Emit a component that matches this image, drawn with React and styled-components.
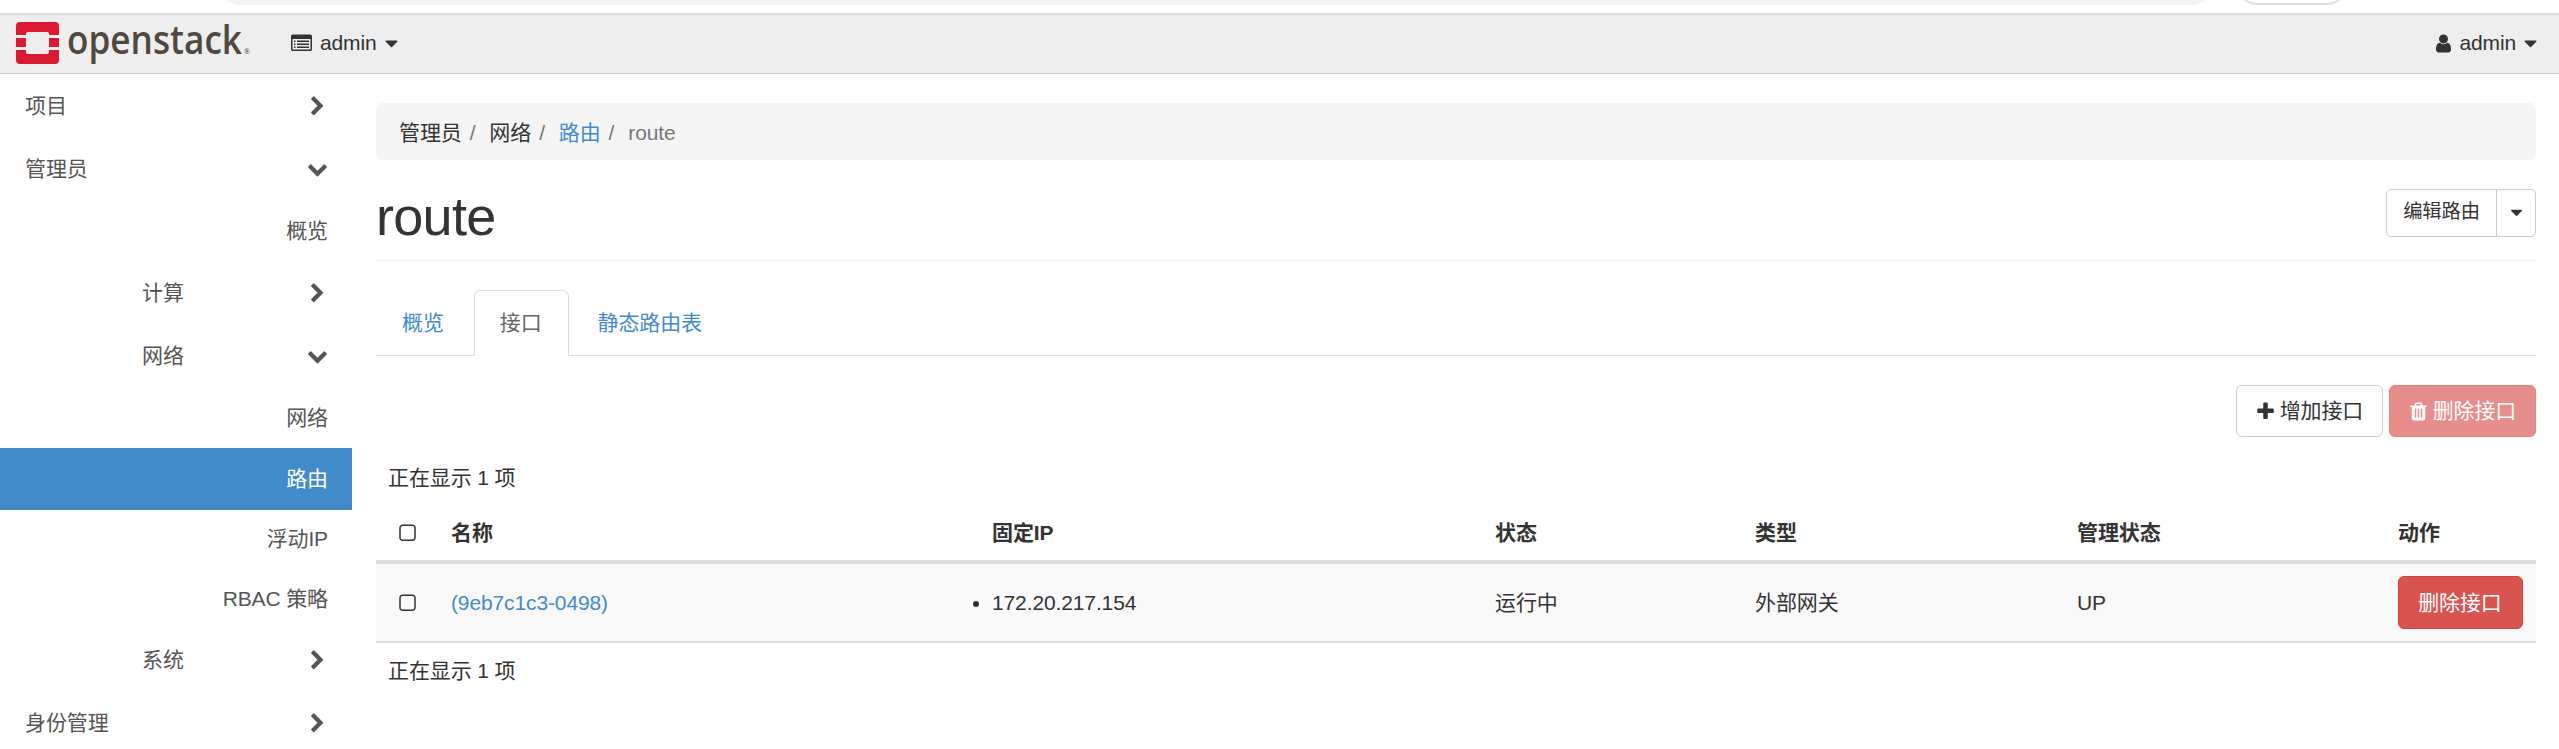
import React from "react";
import styled, { createGlobalStyle } from "styled-components";

const Global = createGlobalStyle`
  *, *::before, *::after { box-sizing: border-box; }
  html, body { margin: 0; height: 749px; overflow: hidden; background: #fff; }
  body {
    font: 21px/30px "Liberation Sans", "Noto Sans CJK SC", sans-serif;
    letter-spacing: -0.12px;
    color: #333;
  }
`;

const link = "#428bca";

const PATHS = {
  square:
    "M1312 256h-832q-66 0-113 47t-47 113v832q0 66 47 113t113 47h832q66 0 113-47t47-113v-832q0-66-47-113t-113-47zm288 160v832q0 119-84.5 203.5t-203.5 84.5h-832q-119 0-203.5-84.5t-84.5-203.5v-832q0-119 84.5-203.5t203.5-84.5h832q119 0 203.5 84.5t84.5 203.5z",
  plus:
    "M1600 736v192q0 40-28 68t-68 28h-416v416q0 40-28 68t-68 28h-192q-40 0-68-28t-28-68v-416h-416q-40 0-68-28t-28-68v-192q0-40 28-68t68-28h416v-416q0-40 28-68t68-28h192q40 0 68 28t28 68v416h416q40 0 68 28t28 68z",
  user:
    "M1536 1399q0 109-62.5 187t-150.5 78h-854q-88 0-150.5-78t-62.5-187q0-85 8.5-160.5t31.5-152 58.5-131 94-89 134.5-34.5q131 128 313 128t313-128q76 0 134.5 34.5t94 89 58.5 131 31.5 152 8.5 160.5zm-256-887q0 159-112.5 271.5t-271.5 112.5-271.5-112.5-112.5-271.5 112.5-271.5 271.5-112.5 271.5 112.5 112.5 271.5z",
  trash:
    "M704 1376v-704q0-14-9-23t-23-9h-64q-14 0-23 9t-9 23v704q0 14 9 23t23 9h64q14 0 23-9t9-23zm256 0v-704q0-14-9-23t-23-9h-64q-14 0-23 9t-9 23v704q0 14 9 23t23 9h64q14 0 23-9t9-23zm256 0v-704q0-14-9-23t-23-9h-64q-14 0-23 9t-9 23v704q0 14 9 23t23 9h64q14 0 23-9t9-23zm-544-992h448l-48-117q-7-9-17-11h-317q-10 2-17 11zm928 32v64q0 14-9 23t-23 9h-96v948q0 83-47 143.5t-113 60.5h-832q-66 0-113-58.5t-47-141.5v-952h-96q-14 0-23-9t-9-23v-64q0-14 9-23t23-9h309l70-167q15-37 54-63t79-26h320q40 0 79 26t54 63l70 167h309q14 0 23 9t9 23z",
  caret:
    "M1408 704q0 26-19 45l-448 448q-19 19-45 19t-45-19l-448-448q-19-19-19-45t19-45 45-19h896q26 0 45 19t19 45z",
  right:
    "M1363 877l-742 742q-19 19-45 19t-45-19l-166-166q-19-19-19-45t19-45l531-531-531-531q-19-19-19-45t19-45l166-166q19-19 45-19t45 19l742 742q19 19 19 45t-19 45z",
  down:
    "M1683 808l-742 741q-19 19-45 19t-45-19l-742-741q-19-19-19-45.5t19-45.5l166-165q19-19 45-19t45 19l531 531 531-531q19-19 45-19t45 19l166 165q19 19 19 45.5t-19 45.5z",
  list:
    "M256 1152h128v128h-128zM256 896h128v128h-128zM256 640h128v128h-128zM512 1152h1024v128h-1024zM512 896h1024v128h-1024zM512 640h1024v128h-1024zM1664 1376v-832q0-13-9.5-22.5t-22.5-9.5h-1472q-13 0-22.5 9.5t-9.5 22.5v832q0 13 9.5 22.5t22.5 9.5h1472q13 0 22.5-9.5t9.5-22.5zm128-1088v1088q0 66-47 113t-113 47h-1472q-66 0-113-47t-47-113v-1088q0-66 47-113t113-47h1472q66 0 113 47t47 113z",
};

const Svg = styled.svg`
  display: block;
  flex: none;
  width: ${(p) => p.$size}px;
  height: ${(p) => p.$size}px;
  fill: currentColor;
`;

const Icon = ({ name, size = 21, className }) => (
  <Svg $size={size} className={className} viewBox="0 0 1792 1792" aria-hidden="true">
    <path fillRule="evenodd" d={PATHS[name]} />
  </Svg>
);

const Page = styled.div`
  width: 2559px;
  height: 749px;
  overflow: hidden;
`;

const BrowserEdge = styled.div`
  display: flex;
  align-items: flex-end;
  height: 13px;
  padding-left: 220px;
  gap: 25px;
`;

const AddressPill = styled.div`
  width: 1992px;
  height: 40px;
  margin-bottom: 8px;
  border-radius: 20px;
  background: #f1f3f4;
`;

const ChipPill = styled.div`
  width: 110px;
  height: 40px;
  margin-bottom: 8px;
  border: 2px solid #dfe1e3;
  border-radius: 20px;
`;

const TopBar = styled.header`
  display: flex;
  align-items: center;
  height: 61px;
  padding: 0 22px 0 16px;
  background: #eee;
  border-top: 2px solid #d9d9d9;
  border-bottom: 1px solid #ccc;
`;

const Brand = styled.div`
  display: flex;
  align-items: center;
  width: 236px;
  height: 58px;
  flex: none;
`;

const LogoMark = styled.svg`
  display: block;
  flex: none;
  width: 43px;
  height: 42px;
  margin-bottom: 3px;
`;

const Wordmark = styled.svg`
  display: block;
  flex: none;
  width: 185px;
  height: 58px;
  margin-left: 8px;
  overflow: visible;
  font-family: "Open Sans", sans-serif;
  letter-spacing: 0;
  fill: #51483f;
`;

const Menu = styled.div`
  display: flex;
  align-items: center;
  gap: 8px;
  margin-left: ${(p) => (p.$end ? "auto" : "39px")};
  margin-bottom: 2px;
  line-height: 30px;
`;

const UserIcon = styled(Icon)`
  margin-right: -3px;
`;

const MenuCaret = styled(Icon)`
  margin: 0 -4px 0 ${(p) => (p.$tight ? -5 : -4)}px;
`;

const Body = styled.div`
  display: flex;
`;

const Sidebar = styled.nav`
  width: 352px;
  flex: none;
  padding-top: 1px;
`;

const NavItem = styled.div`
  display: flex;
  align-items: center;
  justify-content: ${(p) => (p.$leaf ? "flex-end" : "space-between")};
  height: ${(p) => p.$height}px;
  padding: 0 24px 0 ${(p) => (p.$nested ? 142 : 25)}px;
  color: ${(p) => (p.$active ? "#fff" : "#555")};
  background: ${(p) => (p.$active ? link : "transparent")};
`;

const Main = styled.main`
  width: 2160px;
  margin-left: 24px;
  padding-top: 29px;
`;

const Breadcrumb = styled.div`
  display: flex;
  align-items: center;
  height: 57px;
  padding: 2px 23px 0;
  border-radius: 6px;
  background: #f5f5f5;
`;

const Crumb = styled.span`
  color: ${(p) => p.$color || "#333"};

  &:not(:first-child)::before {
    content: "/";
    padding: 0 14px 0 8px;
    color: #777;
  }
`;

const TitleRow = styled.div`
  display: flex;
  justify-content: space-between;
  align-items: flex-start;
  height: 101px;
  padding-top: 29px;
  border-bottom: 1px solid #eee;
`;

const Title = styled.h1`
  margin: -2px 0 0;
  font-size: 54px;
  line-height: 59px;
  font-weight: 400;
  letter-spacing: -0.7px;
`;

const SplitButton = styled.div`
  display: flex;
  height: 48px;
  border: 1px solid #ccc;
  border-radius: 5px;
  font-size: 19.3px;
  line-height: 43px;
`;

const SplitMain = styled.span`
  width: 110px;
  text-align: center;
  border-right: 1px solid #ccc;
`;

const SplitToggle = styled.span`
  display: flex;
  align-items: center;
  justify-content: center;
  width: 38px;
  padding-bottom: 2px;
`;

const Tabs = styled.div`
  display: flex;
  height: 66px;
  margin-top: 29px;
  border-bottom: 1px solid #ddd;
`;

const Tab = styled.div`
  height: 66px;
  padding: 17px 26px 0 25px;
  margin-right: 3px;
  border: 1px solid ${(p) => (p.$active ? "#ddd" : "transparent")};
  border-bottom: ${(p) => (p.$active ? "1px solid #fff" : "0")};
  border-radius: 6px 6px 0 0;
  color: ${(p) => (p.$active ? "#666" : link)};
`;

const Actions = styled.div`
  display: flex;
  justify-content: flex-end;
  gap: 6px;
  margin-top: 29px;
`;

const Button = styled.button`
  display: flex;
  align-items: center;
  justify-content: center;
  gap: 4px;
  width: ${(p) => p.$width || 147}px;
  height: ${(p) => p.$height || 52}px;
  padding: 0 1px 0 0;
  border: 1px solid ${(p) => (p.$danger ? "#d43f3a" : "#ccc")};
  border-radius: 6px;
  background: ${(p) => (p.$danger ? "#d9534f" : "#fff")};
  color: ${(p) => (p.$danger ? "#fff" : "#333")};
  opacity: ${(p) => (p.disabled ? 0.65 : 1)};
  font: inherit;
  letter-spacing: inherit;
`;

const Count = styled.div`
  height: ${(p) => p.$height}px;
  padding: ${(p) => p.$top}px 12px 0;
`;

const GridRow = styled.div`
  display: grid;
  grid-template-columns: 63px 541px 503px 260px 322px 321px 150px;
  align-items: center;
`;

const HeadRow = styled(GridRow)`
  height: 62px;
  padding-top: 3px;
  border-bottom: 4px solid #ddd;
  font-weight: 700;
`;

const DataRow = styled(GridRow)`
  height: 79px;
  background: #f9f9f9;
  border-bottom: 2px solid #ddd;
`;

const Cell = styled.div`
  padding: 0 12px;
  color: ${(p) => (p.$link ? link : "inherit")};
`;

const CheckCell = styled.div`
  padding: 1px 0 0 21px;
`;

const IpList = styled.ul`
  margin: 0;
  padding: 0;
`;

const NAV = [
  { text: "项目", height: 62, icon: "right" },
  { text: "管理员", height: 63, icon: "down" },
  { text: "概览", height: 62 },
  { text: "计算", height: 62, icon: "right", nested: true },
  { text: "网络", height: 63, icon: "down", nested: true },
  { text: "网络", height: 61 },
  { text: "路由", height: 62, active: true },
  { text: "浮动IP", height: 58 },
  { text: "RBAC 策略", height: 61 },
  { text: "系统", height: 62, icon: "right", nested: true },
  { text: "身份管理", height: 64, icon: "right" },
];

const HEADINGS = ["名称", "固定IP", "状态", "类型", "管理状态", "动作"];

const OpenStackLogo = () => (
  <Brand>
    <LogoMark viewBox="0 0 43 42" aria-hidden="true">
      <g fill="#da1a32">
        <path d="M4 0h35a4 4 0 0 1 4 4v9H33v-1a2 2 0 0 0-2-2H12a2 2 0 0 0-2 2v1H0V4a4 4 0 0 1 4-4z" />
        <path d="M0 16h10v9H0zM33 16h10v9H33z" />
        <path d="M0 28h10v2a2 2 0 0 0 2 2h19a2 2 0 0 0 2-2v-2h10v10a4 4 0 0 1-4 4H4a4 4 0 0 1-4-4z" />
      </g>
    </LogoMark>
    <Wordmark viewBox="0 0 185 58">
      <text x="0" y="38.5" fontSize="40" fontWeight="600" textLength="175" lengthAdjust="spacingAndGlyphs">
        openstack
      </text>
      <text x="177" y="38.5" fontSize="7">
        ®
      </text>
    </Wordmark>
  </Brand>
);

export default function App() {
  return (
    <Page>
      <Global />
      <BrowserEdge>
        <AddressPill />
        <ChipPill />
      </BrowserEdge>
      <TopBar>
        <OpenStackLogo />
        <Menu>
          <Icon name="list" />
          admin
          <MenuCaret name="caret" />
        </Menu>
        <Menu $end>
          <UserIcon name="user" />
          admin
          <MenuCaret name="caret" />
        </Menu>
      </TopBar>
      <Body>
        <Sidebar>
          {NAV.map((n, i) => (
            <NavItem key={i} $height={n.height} $leaf={!n.icon} $nested={n.nested} $active={n.active}>
              {n.text}
              {n.icon && <Icon name={n.icon} />}
            </NavItem>
          ))}
        </Sidebar>
        <Main>
          <Breadcrumb>
            <Crumb>管理员</Crumb>
            <Crumb>网络</Crumb>
            <Crumb $color={link}>路由</Crumb>
            <Crumb $color="#777">route</Crumb>
          </Breadcrumb>
          <TitleRow>
            <Title>route</Title>
            <SplitButton>
              <SplitMain>编辑路由</SplitMain>
              <SplitToggle>
                <Icon name="caret" size={19} />
              </SplitToggle>
            </SplitButton>
          </TitleRow>
          <Tabs>
            <Tab>概览</Tab>
            <Tab $active>接口</Tab>
            <Tab>静态路由表</Tab>
          </Tabs>
          <Actions>
            <Button>
              <Icon name="plus" size={21} />
              增加接口
            </Button>
            <Button $danger disabled>
              <Icon name="trash" size={21} />
              删除接口
            </Button>
          </Actions>
          <Count $height={65} $top={26}>正在显示 1 项</Count>
          <HeadRow>
            <CheckCell>
              <Icon name="square" />
            </CheckCell>
            {HEADINGS.map((h) => (
              <Cell key={h}>{h}</Cell>
            ))}
          </HeadRow>
          <DataRow>
            <CheckCell>
              <Icon name="square" />
            </CheckCell>
            <Cell $link>(9eb7c1c3-0498)</Cell>
            <Cell>
              <IpList>
                <li>172.20.217.154</li>
              </IpList>
            </Cell>
            <Cell>运行中</Cell>
            <Cell>外部网关</Cell>
            <Cell>UP</Cell>
            <Cell>
              <Button $danger $width={125} $height={53}>删除接口</Button>
            </Cell>
          </DataRow>
          <Count $height={60} $top={13}>正在显示 1 项</Count>
        </Main>
      </Body>
    </Page>
  );
}
